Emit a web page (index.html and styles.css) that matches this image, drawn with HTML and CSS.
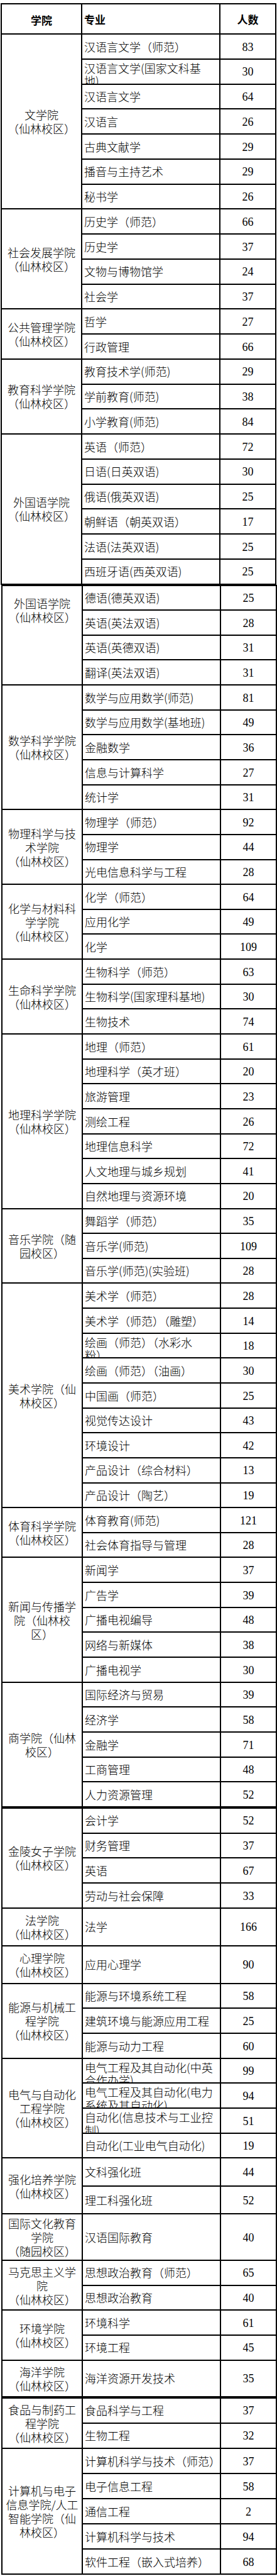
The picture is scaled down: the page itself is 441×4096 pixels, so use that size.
FILE: index.html
```html
<!DOCTYPE html>
<html lang="zh-CN">
<head>
<meta charset="utf-8">
<title>招生计划</title>
<link rel="stylesheet" href="styles.css">
</head>
<body>
<div class="sheet">

<div class="sec sa">
  <div class="c hd">学院</div><div class="m hd">专业</div><div class="n hd">人数</div>

  <div class="c s7"><span>文学院<br>（仙林校区）</span></div>
  <div class="m">汉语言文学（师范）</div><div class="n">83</div>
  <div class="m w"><span>汉语言文学(国家文科基<br>地)</span></div><div class="n">30</div>
  <div class="m">汉语言文学</div><div class="n">64</div>
  <div class="m">汉语言</div><div class="n">26</div>
  <div class="m">古典文献学</div><div class="n">29</div>
  <div class="m">播音与主持艺术</div><div class="n">29</div>
  <div class="m">秘书学</div><div class="n">26</div>

  <div class="c s4"><span>社会发展学院<br>（仙林校区）</span></div>
  <div class="m">历史学（师范）</div><div class="n">66</div>
  <div class="m">历史学</div><div class="n">37</div>
  <div class="m">文物与博物馆学</div><div class="n">24</div>
  <div class="m">社会学</div><div class="n">37</div>

  <div class="c s2"><span>公共管理学院<br>（仙林校区）</span></div>
  <div class="m">哲学</div><div class="n">27</div>
  <div class="m">行政管理</div><div class="n">66</div>

  <div class="c s3"><span>教育科学学院<br>（仙林校区）</span></div>
  <div class="m">教育技术学(师范)</div><div class="n">29</div>
  <div class="m">学前教育(师范)</div><div class="n">38</div>
  <div class="m">小学教育(师范)</div><div class="n">84</div>

  <div class="c s6"><span>外国语学院<br>（仙林校区）</span></div>
  <div class="m">英语（师范）</div><div class="n">72</div>
  <div class="m">日语(日英双语)</div><div class="n">30</div>
  <div class="m">俄语(俄英双语)</div><div class="n">25</div>
  <div class="m">朝鲜语（朝英双语）</div><div class="n">17</div>
  <div class="m">法语(法英双语)</div><div class="n">25</div>
  <div class="m">西班牙语(西英双语)</div><div class="n">25</div>
</div>

<div class="sec sb">
  <div class="c s4 top"><span>外国语学院<br>（仙林校区）</span></div>
  <div class="m">德语(德英双语)</div><div class="n">25</div>
  <div class="m">英语(英法双语)</div><div class="n">28</div>
  <div class="m">英语(英德双语)</div><div class="n">31</div>
  <div class="m">翻译(英法双语)</div><div class="n">31</div>

  <div class="c s5"><span>数学科学学院<br>（仙林校区）</span></div>
  <div class="m">数学与应用数学(师范)</div><div class="n">81</div>
  <div class="m">数学与应用数学(基地班)</div><div class="n">49</div>
  <div class="m">金融数学</div><div class="n">36</div>
  <div class="m">信息与计算科学</div><div class="n">27</div>
  <div class="m">统计学</div><div class="n">31</div>

  <div class="c s3"><span>物理科学与技<br>术学院<br>（仙林校区）</span></div>
  <div class="m">物理学（师范）</div><div class="n">92</div>
  <div class="m">物理学</div><div class="n">44</div>
  <div class="m">光电信息科学与工程</div><div class="n">28</div>

  <div class="c s3"><span>化学与材料科<br>学学院<br>（仙林校区）</span></div>
  <div class="m">化学（师范）</div><div class="n">64</div>
  <div class="m">应用化学</div><div class="n">49</div>
  <div class="m">化学</div><div class="n">109</div>

  <div class="c s3"><span>生命科学学院<br>（仙林校区）</span></div>
  <div class="m">生物科学（师范）</div><div class="n">63</div>
  <div class="m">生物科学(国家理科基地)</div><div class="n">30</div>
  <div class="m">生物技术</div><div class="n">74</div>

  <div class="c s7"><span>地理科学学院<br>（仙林校区）</span></div>
  <div class="m">地理（师范）</div><div class="n">61</div>
  <div class="m">地理科学（英才班）</div><div class="n">20</div>
  <div class="m">旅游管理</div><div class="n">23</div>
  <div class="m">测绘工程</div><div class="n">26</div>
  <div class="m">地理信息科学</div><div class="n">72</div>
  <div class="m">人文地理与城乡规划</div><div class="n">41</div>
  <div class="m">自然地理与资源环境</div><div class="n">20</div>

  <div class="c s3"><span>音乐学院（随<br>园校区）</span></div>
  <div class="m">舞蹈学（师范）</div><div class="n">35</div>
  <div class="m">音乐学(师范)</div><div class="n">109</div>
  <div class="m">音乐学(师范)(实验班)</div><div class="n">28</div>

  <div class="c s9"><span>美术学院（仙<br>林校区）</span></div>
  <div class="m">美术学（师范）</div><div class="n">28</div>
  <div class="m">美术学（师范）（雕塑）</div><div class="n">14</div>
  <div class="m w"><span>绘画（师范）（水彩水<br>粉）</span></div><div class="n">18</div>
  <div class="m">绘画（师范）（油画）</div><div class="n">30</div>
  <div class="m">中国画（师范）</div><div class="n">25</div>
  <div class="m">视觉传达设计</div><div class="n">43</div>
  <div class="m">环境设计</div><div class="n">42</div>
  <div class="m">产品设计（综合材料）</div><div class="n">13</div>
  <div class="m">产品设计（陶艺）</div><div class="n">19</div>

  <div class="c s2"><span>体育科学学院<br>（仙林校区）</span></div>
  <div class="m">体育教育(师范)</div><div class="n">121</div>
  <div class="m">社会体育指导与管理</div><div class="n">28</div>

  <div class="c s5"><span>新闻与传播学<br>院（仙林校<br>区）</span></div>
  <div class="m">新闻学</div><div class="n">37</div>
  <div class="m">广告学</div><div class="n">39</div>
  <div class="m">广播电视编导</div><div class="n">48</div>
  <div class="m">网络与新媒体</div><div class="n">38</div>
  <div class="m">广播电视学</div><div class="n">30</div>

  <div class="c s5"><span>商学院（仙林<br>校区）</span></div>
  <div class="m">国际经济与贸易</div><div class="n">39</div>
  <div class="m">经济学</div><div class="n">58</div>
  <div class="m">金融学</div><div class="n">71</div>
  <div class="m">工商管理</div><div class="n">48</div>
  <div class="m">人力资源管理</div><div class="n">52</div>
</div>

<div class="sec sc">
  <div class="c s4"><span>金陵女子学院<br>（仙林校区）</span></div>
  <div class="m">会计学</div><div class="n">52</div>
  <div class="m">财务管理</div><div class="n">37</div>
  <div class="m">英语</div><div class="n">67</div>
  <div class="m">劳动与社会保障</div><div class="n">33</div>

  <div class="c s1"><span>法学院<br>（仙林校区）</span></div>
  <div class="m h60">法学</div><div class="n h60">166</div>

  <div class="c s1"><span>心理学院<br>（仙林校区）</span></div>
  <div class="m h60">应用心理学</div><div class="n h60">90</div>

  <div class="c s3"><span>能源与机械工<br>程学院<br>（仙林校区）</span></div>
  <div class="m">能源与环境系统工程</div><div class="n">58</div>
  <div class="m">建筑环境与能源应用工程</div><div class="n">25</div>
  <div class="m">能源与动力工程</div><div class="n">60</div>

  <div class="c s4"><span>电气与自动化<br>工程学院<br>（仙林校区）</span></div>
  <div class="m w"><span>电气工程及其自动化(中英<br>合作办学)</span></div><div class="n">99</div>
  <div class="m w"><span>电气工程及其自动化(电力<br>系统及其自动化)</span></div><div class="n">94</div>
  <div class="m w"><span>自动化(信息技术与工业控<br>制)</span></div><div class="n">51</div>
  <div class="m">自动化(工业电气自动化)</div><div class="n">19</div>

  <div class="c s2"><span>强化培养学院<br>（仙林校区）</span></div>
  <div class="m h44">文科强化班</div><div class="n h44">44</div>
  <div class="m h44">理工科强化班</div><div class="n h44">52</div>

  <div class="c s1"><span>国际文化教育<br>学院<br>（随园校区）</span></div>
  <div class="m h73">汉语国际教育</div><div class="n h73">40</div>

  <div class="c s2"><span>马克思主义学<br>院<br>（仙林校区）</span></div>
  <div class="m">思想政治教育（师范）</div><div class="n">65</div>
  <div class="m">思想政治教育</div><div class="n">40</div>

  <div class="c s2"><span>环境学院<br>（仙林校区）</span></div>
  <div class="m">环境科学</div><div class="n">61</div>
  <div class="m">环境工程</div><div class="n">45</div>

  <div class="c s1"><span>海洋学院<br>（仙林校区）</span></div>
  <div class="m h58">海洋资源开发技术</div><div class="n h58">35</div>
</div>

<div class="sec sd">
  <div class="c s2"><span>食品与制药工<br>程学院<br>（仙林校区）</span></div>
  <div class="m">食品科学与工程</div><div class="n">37</div>
  <div class="m">生物工程</div><div class="n">32</div>

  <div class="c s5"><span>计算机与电子<br>信息学院/人工<br>智能学院（仙<br>林校区）</span></div>
  <div class="m">计算机科学与技术（师范）</div><div class="n">37</div>
  <div class="m">电子信息工程</div><div class="n">58</div>
  <div class="m">通信工程</div><div class="n">2</div>
  <div class="m">计算机科学与技术</div><div class="n">94</div>
  <div class="m">软件工程（嵌入式培养）</div><div class="n">68</div>
</div>

</div>
</body>
</html>
```

FILE: styles.css
```css
html, body {
  margin: 0;
  padding: 0;
  background: #fff;
}

body {
  font-family: "Noto Sans CJK SC", "Noto Sans", sans-serif;
  font-weight: 300;
  color: #000;
}

.sheet {
  padding-top: 5px;
}

.sec {
  --rh: 39.7px;
  display: grid;
  grid-template-columns: 128px 220px 1fr;
  width: 439px;
  box-sizing: border-box;
  margin-left: 2px;
  border-top: 2px solid #000;
  border-left: 2px solid #000;
}

.sa { margin-left: 1px; --rh: 39.75px; }
.sb { --rh: 39.65px; }
.sc { --rh: 39.7px; }
.sd { --rh: 40.1px; }

.c, .m, .n {
  box-sizing: border-box;
  border-right: 2px solid #000;
  border-bottom: 2px solid #000;
  display: flex;
  align-items: center;
  overflow: hidden;
  white-space: nowrap;
  min-height: 0;
}

.c {
  grid-column: 1;
  justify-content: center;
  text-align: center;
  font-size: 18px;
  line-height: 22px;
}

.c.top {
  align-items: flex-start;
  padding-top: 16px;
}

.m {
  grid-column: 2;
  height: var(--rh);
  padding-left: 3px;
  font-size: 18px;
  line-height: 20.5px;
}

.m.w {
  align-items: flex-start;
  padding-top: 3px;
}

.n {
  grid-column: 3;
  height: var(--rh);
  justify-content: center;
  padding-top: 2px;
  font-family: "Liberation Serif", "Times New Roman", serif;
  font-weight: 400;
  font-size: 18px;
  line-height: 20.5px;
}

.hd {
  height: 48px;
  padding-top: 3px;
  font-family: "Noto Sans CJK SC", sans-serif;
  font-weight: 700;
  font-size: 17px;
}

.n.hd {
  font-family: "Noto Sans CJK SC", sans-serif;
}

.s1 { grid-row: span 1; }
.s2 { grid-row: span 2; }
.s3 { grid-row: span 3; }
.s4 { grid-row: span 4; }
.s5 { grid-row: span 5; }
.s6 { grid-row: span 6; }
.s7 { grid-row: span 7; }
.s9 { grid-row: span 9; }

.h60 { height: 60px; }
.h44 { height: 44.4px; }
.h73 { height: 73.6px; }
.h58 { height: 58px; }
```
